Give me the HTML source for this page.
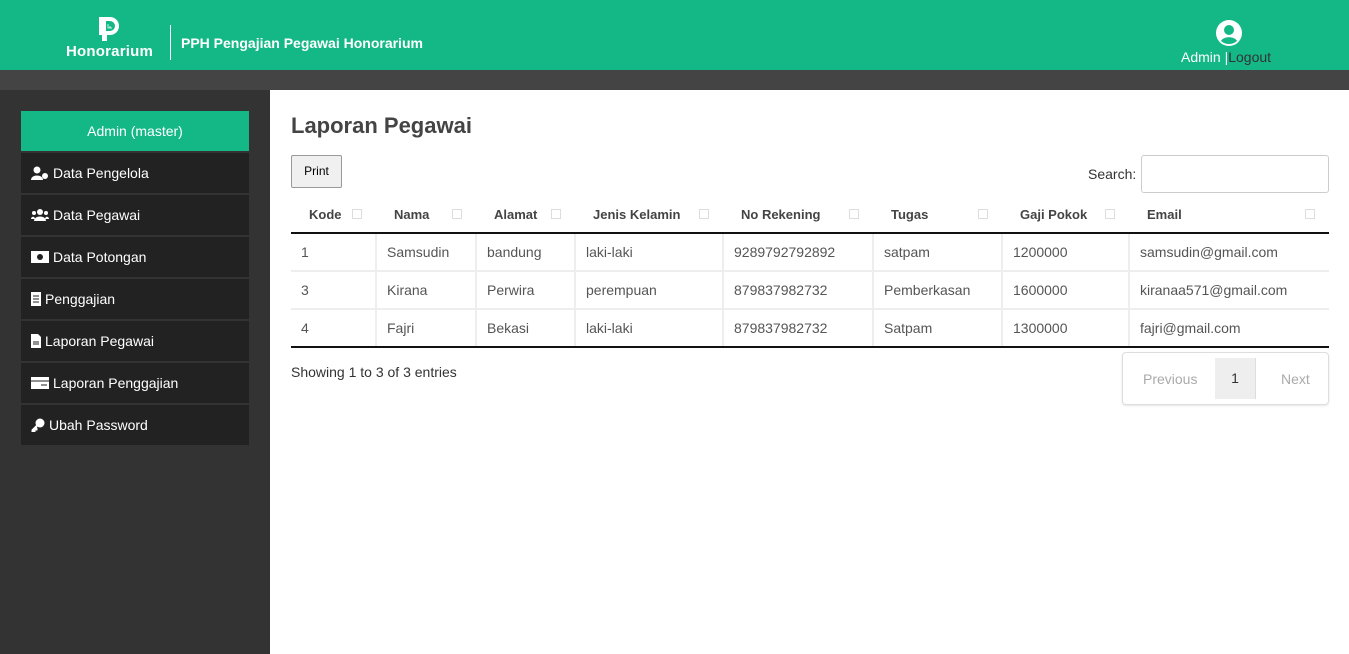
<!DOCTYPE html>
<html><head><meta charset="utf-8"><style>
*{margin:0;padding:0;box-sizing:border-box}
body{width:1349px;height:654px;overflow:hidden;font-family:"Liberation Sans",sans-serif;background:#fff;position:relative;color:#555}
.top{position:absolute;left:0;top:0;width:1349px;height:70px;background:#14b886}
.bar{position:absolute;left:0;top:70px;width:1349px;height:20px;background:#444}
.side{position:absolute;left:0;top:90px;width:270px;height:564px;background:#333}
.admin{position:absolute;left:21px;top:111px;width:228px;height:40px;background:#14b886;color:#fff;font-size:14px;text-align:center;line-height:40px}
.mi{position:absolute;left:21px;width:228px;height:40px;background:#222;color:#fff;font-size:14px;line-height:40px;padding-left:10px;display:flex;align-items:center;gap:4px}
.mi svg{flex:none}
h1{position:absolute;left:291px;top:113px;font-size:22px;color:#444;font-weight:bold}
.print{position:absolute;left:291px;top:155px;width:51px;height:33px;background:#f0f0f0;border:1px solid #999;border-radius:2px;font-size:12px;color:#000;text-align:center;line-height:31px}
.slab{position:absolute;left:1088px;top:166px;font-size:14px;color:#333}
.sinp{position:absolute;left:1141px;top:155px;width:188px;height:38px;border:1px solid #ccc;border-radius:3px}
table{position:absolute;left:291px;top:197px;width:1038px;border-collapse:collapse;font-size:14px}
th{height:36px;text-align:left;color:#444;font-weight:bold;font-size:13px;border-bottom:2px solid #111;position:relative;padding-left:18px}
th i{position:absolute;right:14px;top:12px;width:10px;height:10px;border:1px solid #ddd}
td{height:38px;border:2px solid #eee;padding-left:10px;color:#555}
tr:last-child td{border-bottom:2px solid #111}
td:first-child{border-left:none}td:last-child{border-right:none}
.show{position:absolute;left:291px;top:364px;font-size:14px;color:#333}
.pag{position:absolute;left:1122px;top:352px;width:207px;height:53px;border:1px solid #ddd;border-radius:4px;box-shadow:0 1px 2px rgba(0,0,0,.1);font-size:14px;color:#aaa}
.pag span{position:absolute;top:18px}
.pg1{position:absolute;left:92px;top:5px;width:41px;height:41px;background:#eee;border-right:1px solid #ddd;color:#333;text-align:center;line-height:41px}
</style></head><body>
<div class="top">
 <svg style="position:absolute;left:96px;top:15px" width="28" height="28" viewBox="0 0 28 28"><path d="M3 2h11a9 9 0 0 1 0 18h-3v6H6v-6H3z" fill="#fff"/><path d="M10 6h4a5 5 0 0 1 0 10h-4z" fill="#14b886"/><path d="M12 9v4h4M14 11v2" stroke="#fff" fill="none" stroke-width="0.8"/></svg>
 <div style="position:absolute;left:66px;top:43px;color:#fff;font-size:15px;font-weight:bold;letter-spacing:.2px">Honorarium</div>
 <div style="position:absolute;left:170px;top:25px;width:1px;height:35px;background:#fff"></div>
 <div style="position:absolute;left:181px;top:35px;color:#fff;font-size:14px;font-weight:bold">PPH Pengajian Pegawai Honorarium</div>
 <svg style="position:absolute;left:1215px;top:19px" width="28" height="28" viewBox="0 0 28 28"><circle cx="14" cy="14" r="13" fill="#fff"/><circle cx="14" cy="11" r="5" fill="#14b886"/><path d="M6 22c2-5 14-5 16 0a12 12 0 0 1-16 0z" fill="#14b886"/></svg>
 <div style="position:absolute;left:1181px;top:49px;font-size:14px;color:#fff">Admin <span style="color:#fff">|</span><span style="color:#333">Logout</span></div>
</div>
<div class="bar"></div>
<div class="side"></div>
<div class="admin">Admin (master)</div>
<div class="mi" style="top:153px"><svg width="18" height="14"><circle cx="6" cy="4" r="3.5" fill="#fff"/><path d="M0 14c0-6 12-6 12 0z" fill="#fff"/><circle cx="14" cy="10" r="3" fill="#fff"/></svg>Data Pengelola</div>
<div class="mi" style="top:195px"><svg width="18" height="14"><circle cx="9" cy="4" r="3" fill="#fff"/><circle cx="3" cy="5" r="2" fill="#fff"/><circle cx="15" cy="5" r="2" fill="#fff"/><path d="M3 13c0-6 12-6 12 0z" fill="#fff"/><path d="M0 11c0-3 4-3 4 0zM14 11c0-3 4-3 4 0z" fill="#fff"/></svg>Data Pegawai</div>
<div class="mi" style="top:237px"><svg width="18" height="12"><rect width="18" height="12" fill="#fff"/><circle cx="9" cy="6" r="3" fill="#222"/></svg>Data Potongan</div>
<div class="mi" style="top:279px"><svg width="10" height="14"><rect width="10" height="14" fill="#fff"/><path d="M2 4h6M2 7h6M2 10h6" stroke="#222"/></svg>Penggajian</div>
<div class="mi" style="top:321px"><svg width="10" height="14"><path d="M0 0h7l3 3v11H0z" fill="#fff"/><path d="M2 8h6M2 10h6" stroke="#222"/></svg>Laporan Pegawai</div>
<div class="mi" style="top:363px"><svg width="18" height="12"><rect width="18" height="12" fill="#fff"/><path d="M0 4h18" stroke="#222"/><path d="M10 8h6" stroke="#222"/></svg>Laporan Penggajian</div>
<div class="mi" style="top:405px"><svg width="14" height="14"><circle cx="9" cy="5" r="4.5" fill="#fff"/><path d="M7 6L1 12v2h3v-2h2v-2" fill="#fff" stroke="#fff"/></svg>Ubah Password</div>
<h1>Laporan Pegawai</h1>
<div class="print">Print</div>
<div class="slab">Search:</div>
<div class="sinp"></div>
<table>
<tr><th style="width:85px">Kode<i></i></th><th style="width:100px">Nama<i></i></th><th style="width:99px">Alamat<i></i></th><th style="width:148px">Jenis Kelamin<i></i></th><th style="width:150px">No Rekening<i></i></th><th style="width:129px">Tugas<i></i></th><th style="width:127px">Gaji Pokok<i></i></th><th>Email<i></i></th></tr>
<tr><td>1</td><td>Samsudin</td><td>bandung</td><td>laki-laki</td><td>9289792792892</td><td>satpam</td><td>1200000</td><td>samsudin@gmail.com</td></tr>
<tr><td>3</td><td>Kirana</td><td>Perwira</td><td>perempuan</td><td>879837982732</td><td>Pemberkasan</td><td>1600000</td><td>kiranaa571@gmail.com</td></tr>
<tr><td>4</td><td>Fajri</td><td>Bekasi</td><td>laki-laki</td><td>879837982732</td><td>Satpam</td><td>1300000</td><td>fajri@gmail.com</td></tr>
</table>
<div class="show">Showing 1 to 3 of 3 entries</div>
<div class="pag"><span style="left:20px">Previous</span><div class="pg1">1</div><span style="left:158px">Next</span></div>
</body></html>
